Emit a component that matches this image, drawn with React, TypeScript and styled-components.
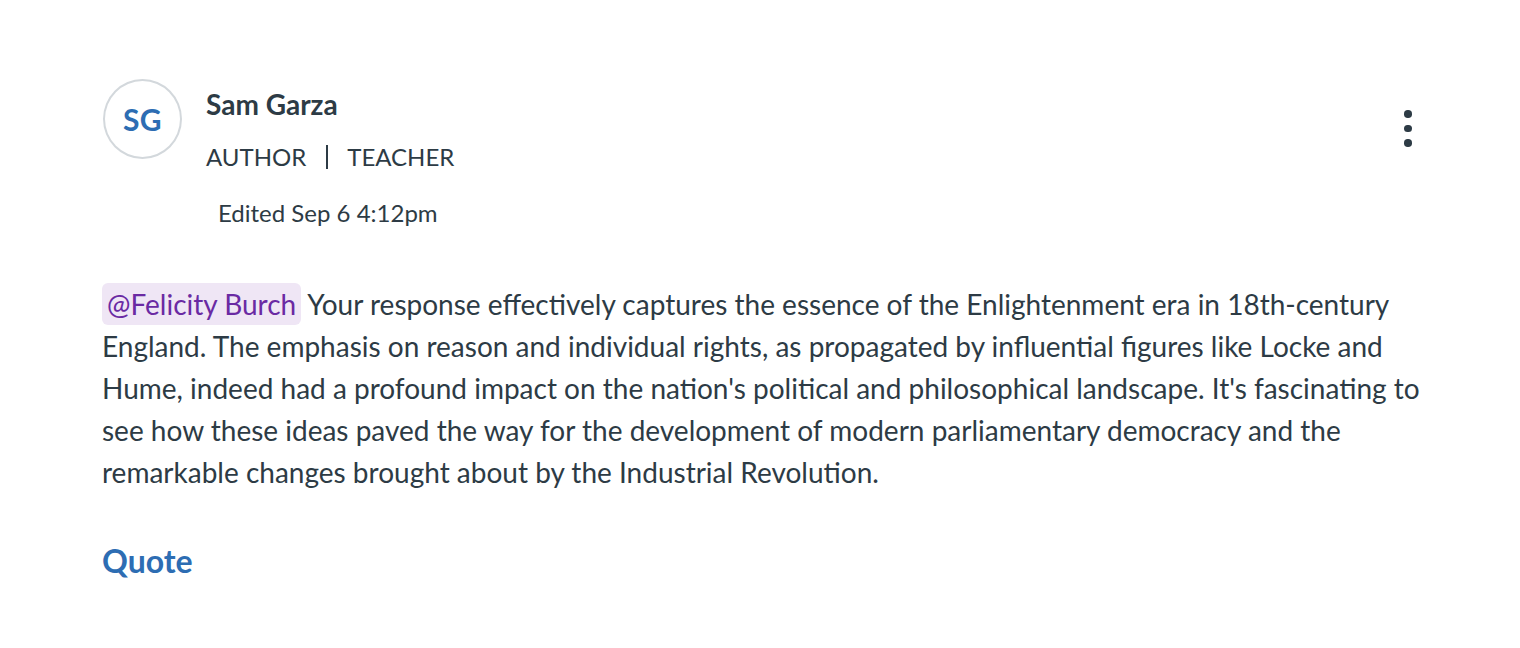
import React from "react";
import styled, { createGlobalStyle } from "styled-components";

const Global = createGlobalStyle`
  html, body { margin: 0; padding: 0; background: #fff; }
  body { font-family: Lato, "Noto Sans", sans-serif; color: #2d3b45; }
`;

const Page = styled.div`
  padding: 79px 78px 0 102px;
`;

const Header = styled.div`
  display: flex;
  align-items: flex-start;
  padding-right: 30px;
`;

const Avatar = styled.div`
  box-sizing: border-box;
  width: 79px;
  height: 80px;
  margin-left: 1px;
  border-radius: 50%;
  border: 2px solid #d3d8dc;
  display: flex;
  align-items: center;
  justify-content: center;
  color: #2d6db3;
  font-weight: 700;
  font-size: 30px;
  letter-spacing: 0.3px;
  flex-shrink: 0;
`;

const Meta = styled.div`
  display: flex;
  flex-direction: column;
  margin-left: 24px;
  margin-top: 9px;
  flex: 1;
`;

const Name = styled.div`
  font-size: 28px;
  font-weight: 700;
  line-height: 32px;
`;

const Roles = styled.div`
  display: flex;
  align-items: center;
  font-size: 24px;
  line-height: 32px;
  margin-top: 21px;
`;

const Divider = styled.span`
  display: inline-block;
  width: 2px;
  height: 24px;
  background: #2d3b45;
  margin: 0 19px 0 20px;
`;

const Edited = styled.div`
  font-size: 24px;
  line-height: 28px;
  margin-top: 26px;
  margin-left: 12px;
`;

const MenuButton = styled.button`
  border: none;
  background: none;
  padding: 0;
  margin-top: 31px;
  width: 8px;
  display: flex;
  flex-direction: column;
  align-items: center;
  gap: 7px;
  cursor: pointer;
`;

const Dot = styled.span`
  width: 7.5px;
  height: 7.5px;
  border-radius: 50%;
  background: #2d3b45;
`;

const Body = styled.p`
  margin: 56px 0 0 0;
  font-size: 28px;
  line-height: 42px;
`;

const Mention = styled.span`
  background: #efe6f5;
  color: #6a2aa3;
  border-radius: 6px;
  padding: 4px 5px;
`;

const QuoteLink = styled.a`
  display: inline-block;
  margin-top: 48px;
  color: #2d6db3;
  font-weight: 700;
  font-size: 32px;
  line-height: 40px;
  text-decoration: none;
`;

export default function App() {
  return (
    <>
      <Global />
      <Page>
        <Header>
          <Avatar>SG</Avatar>
          <Meta>
            <Name>Sam Garza</Name>
            <Roles>
              <span>AUTHOR</span>
              <Divider />
              <span>TEACHER</span>
            </Roles>
            <Edited>Edited Sep 6 4:12pm</Edited>
          </Meta>
          <MenuButton aria-label="Options">
            <Dot />
            <Dot />
            <Dot />
          </MenuButton>
        </Header>
        <Body>
          <Mention>@Felicity Burch</Mention> Your response effectively captures the essence of the
          Enlightenment era in 18th-century England. The emphasis on reason and individual rights, as
          propagated by influential figures like Locke and Hume, indeed had a profound impact on the
          nation's political and philosophical landscape. It's fascinating to see how these ideas paved
          the way for the development of modern parliamentary democracy and the remarkable changes
          brought about by the Industrial Revolution.
        </Body>
        <QuoteLink href="#">Quote</QuoteLink>
      </Page>
    </>
  );
}
